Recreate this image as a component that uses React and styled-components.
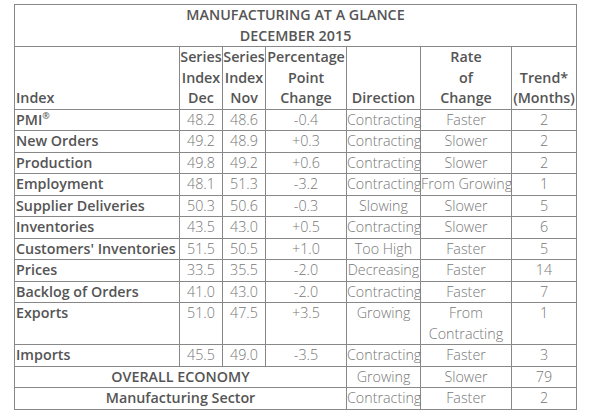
import React from "react";
import styled, { createGlobalStyle } from "styled-components";

const GlobalStyle = createGlobalStyle`
  html, body {
    margin: 0;
    padding: 0;
    background: #ffffff;
  }
`;

const Page = styled.div`
  padding: 4px 0 0 14px;
  font-family: "Open Sans", "Noto Sans", sans-serif;
  font-size: 14.3px;
  line-height: 20.5px;
`;

const Table = styled.table`
  border-collapse: collapse;
  table-layout: fixed;
  width: 562px;
  border: 1.5px solid #505050;
`;

const Title = styled.th`
  font-weight: 600;
  color: #555;
  text-align: center;
  padding: 0;
  border: 1px solid #888;
`;

const HeadCell = styled.th`
  font-weight: 600;
  color: #555;
  text-align: ${(p) => (p.$left ? "left" : "center")};
  vertical-align: bottom;
  padding: 0 0 0 ${(p) => (p.$left ? "1px" : "0")};
  border: 1px solid #888;
  white-space: nowrap;
`;

const NameCell = styled.td`
  font-weight: 600;
  color: #555;
  text-align: ${(p) => (p.$center ? "center" : "left")};
  vertical-align: top;
  padding: 0 0 0 ${(p) => (p.$center ? "0" : "1px")};
  border: 1px solid #888;
  white-space: nowrap;
`;

const Value = styled.td`
  font-weight: 300;
  color: #777;
  text-align: center;
  vertical-align: top;
  padding: 0;
  border: 1px solid #888;
  white-space: ${(p) => (p.$wrap ? "normal" : "nowrap")};
  overflow: visible;
`;

const Sup = styled.sup`
  font-size: 9px;
  line-height: 0;
  vertical-align: 6px;
`;

const rows = [
  ["PMI", "48.2", "48.6", "-0.4", "Contracting", "Faster", "2"],
  ["New Orders", "49.2", "48.9", "+0.3", "Contracting", "Slower", "2"],
  ["Production", "49.8", "49.2", "+0.6", "Contracting", "Slower", "2"],
  ["Employment", "48.1", "51.3", "-3.2", "Contracting", "From Growing", "1"],
  ["Supplier Deliveries", "50.3", "50.6", "-0.3", "Slowing", "Slower", "5"],
  ["Inventories", "43.5", "43.0", "+0.5", "Contracting", "Slower", "6"],
  ["Customers' Inventories", "51.5", "50.5", "+1.0", "Too High", "Faster", "5"],
  ["Prices", "33.5", "35.5", "-2.0", "Decreasing", "Faster", "14"],
  ["Backlog of Orders", "41.0", "43.0", "-2.0", "Contracting", "Faster", "7"],
  ["Exports", "51.0", "47.5", "+3.5", "Growing", "From Contracting", "1"],
  ["Imports", "45.5", "49.0", "-3.5", "Contracting", "Faster", "3"],
];

const summary = [
  ["OVERALL ECONOMY", "Growing", "Slower", "79"],
  ["Manufacturing Sector", "Contracting", "Faster", "2"],
];

export default function App() {
  return (
    <Page>
      <GlobalStyle />
      <Table>
        <colgroup>
          <col style={{ width: 165 }} />
          <col style={{ width: 43 }} />
          <col style={{ width: 43 }} />
          <col style={{ width: 81 }} />
          <col style={{ width: 74 }} />
          <col style={{ width: 91 }} />
          <col style={{ width: 65 }} />
        </colgroup>
        <thead>
          <tr>
            <Title colSpan={7}>
              MANUFACTURING AT A GLANCE
              <br />
              DECEMBER 2015
            </Title>
          </tr>
          <tr>
            <HeadCell $left>Index</HeadCell>
            <HeadCell>
              Series
              <br />
              Index
              <br />
              Dec
            </HeadCell>
            <HeadCell>
              Series
              <br />
              Index
              <br />
              Nov
            </HeadCell>
            <HeadCell>
              Percentage
              <br />
              Point
              <br />
              Change
            </HeadCell>
            <HeadCell>Direction</HeadCell>
            <HeadCell>
              Rate
              <br />
              of
              <br />
              Change
            </HeadCell>
            <HeadCell>
              Trend*
              <br />
              (Months)
            </HeadCell>
          </tr>
        </thead>
        <tbody>
          {rows.map(([name, dec, nov, pct, dir, rate, trend]) => (
            <tr key={name}>
              <NameCell>
                {name}
                {name === "PMI" && <Sup>®</Sup>}
              </NameCell>
              <Value>{dec}</Value>
              <Value>{nov}</Value>
              <Value>{pct}</Value>
              <Value>{dir}</Value>
              <Value $wrap={rate === "From Contracting"}>{rate}</Value>
              <Value>{trend}</Value>
            </tr>
          ))}
          {summary.map(([name, dir, rate, trend]) => (
            <tr key={name}>
              <NameCell colSpan={4} $center>
                {name}
              </NameCell>
              <Value>{dir}</Value>
              <Value>{rate}</Value>
              <Value>{trend}</Value>
            </tr>
          ))}
        </tbody>
      </Table>
    </Page>
  );
}
